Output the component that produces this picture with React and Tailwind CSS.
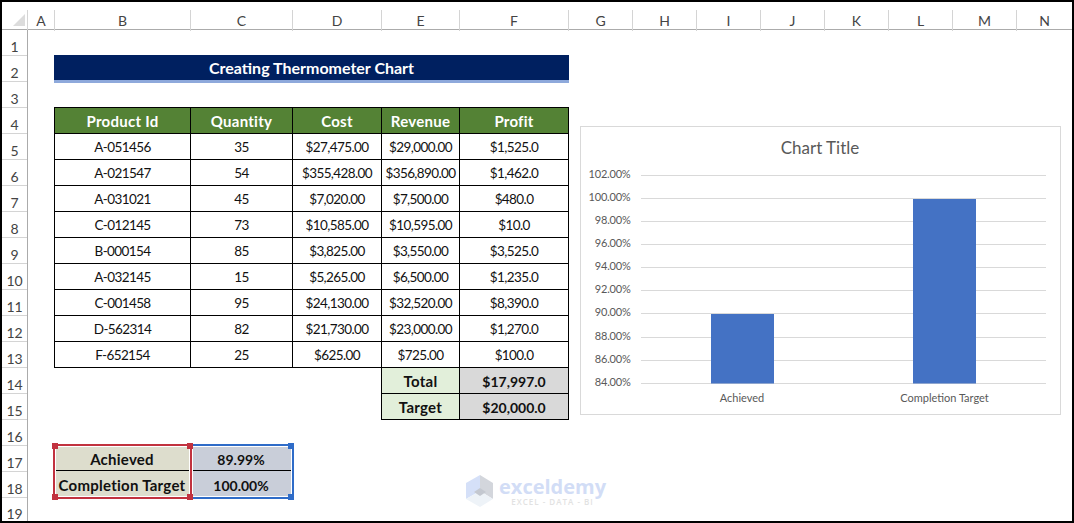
import React from 'react';

const COLUMNS = ['A', 'B', 'C', 'D', 'E', 'F', 'G', 'H', 'I', 'J', 'K', 'L', 'M', 'N'];
const ROWS = Array.from({ length: 19 }, (_, i) => i + 1);

const PRODUCTS = [
  ['A-051456', '35', '$27,475.00', '$29,000.00', '$1,525.0'],
  ['A-021547', '54', '$355,428.00', '$356,890.00', '$1,462.0'],
  ['A-031021', '45', '$7,020.00', '$7,500.00', '$480.0'],
  ['C-012145', '73', '$10,585.00', '$10,595.00', '$10.0'],
  ['B-000154', '85', '$3,825.00', '$3,550.00', '$3,525.0'],
  ['A-032145', '15', '$5,265.00', '$6,500.00', '$1,235.0'],
  ['C-001458', '95', '$24,130.00', '$32,520.00', '$8,390.0'],
  ['D-562314', '82', '$21,730.00', '$23,000.00', '$1,270.0'],
  ['F-652154', '25', '$625.00', '$725.00', '$100.0'],
];

const TABLE_HEAD = ['Product Id', 'Quantity', 'Cost', 'Revenue', 'Profit'];

const AXIS = [
  ['102.00%', 175], ['100.00%', 198], ['98.00%', 221], ['96.00%', 244], ['94.00%', 267],
  ['92.00%', 290], ['90.00%', 313], ['88.00%', 337], ['86.00%', 360], ['84.00%', 383],
];

// one table cell: borders overlap the neighbour so lines stay 1px
function Cell({ children, className = '' }) {
  return (
    <div className={`-mr-px -mb-px pt-[2px] border border-black flex items-center justify-center ${className}`}>
      {children}
    </div>
  );
}

function Handle({ className }) {
  return <span className={`absolute w-[6px] h-[6px] ${className}`}></span>;
}

function ThermometerChart() {
  const font = { fontFamily: 'Lato, sans-serif' };
  return (
    <div className="col-start-8 col-end-16 row-start-5 row-end-17 ml-3 mr-[11px] mt-[19px] mb-[4px] border border-[#d9d9d9] bg-white">
      <svg viewBox="581 127 479 287" width="479" height="287" className="block" style={font}>
        <text x="820" y="154" textAnchor="middle" fontSize="17" fill="#595959">Chart Title</text>
        {AXIS.map(([label, y]) => (
          <g key={label}>
            <line x1="641" x2="1046" y1={y + 0.5} y2={y + 0.5} stroke="#d9d9d9" />
            <text x="630.5" y={y + 0.5} textAnchor="end" dominantBaseline="middle" fontSize="11" letterSpacing="-0.2" fill="#595959">{label}</text>
          </g>
        ))}
        <rect x="711" y="314" width="63" height="69.5" fill="#4472c4" />
        <rect x="913" y="199" width="63" height="184.5" fill="#4472c4" />
        <text x="742" y="402" textAnchor="middle" fontSize="11" fill="#595959">Achieved</text>
        <text x="944.5" y="402" textAnchor="middle" fontSize="11" fill="#595959">Completion Target</text>
      </svg>
    </div>
  );
}

function Watermark() {
  return (
    <div className="absolute left-[464px] top-[473px] flex items-start gap-[5px] pointer-events-none">
      <svg width="28" height="33" viewBox="0 0 28 33" className="block shrink-0">
        <path d="M14 0 L27 8 L27 24 L14 16 Z" fill="#d3d6dc" />
        <path d="M14 0 L0 8 L0 24 L14 16 Z" fill="#d5e0f8" />
        <path d="M0 24 L14 16 L27 24 L14 32 Z" fill="#eef3f8" />
        <path d="M8 17 L14 13 L20 17 L14 21 Z" fill="#c4c8d0" />
      </svg>
      <div className="flex flex-col items-center font-['Open_Sans',sans-serif]">
        <span className="text-[20px] font-bold text-[#d2ddf6] leading-[18px] mt-[3px]">exceldemy</span>
        <span className="text-[8px] font-semibold text-[#e2e2e2] tracking-[1px] leading-[8px] mt-[2px]">EXCEL - DATA - BI</span>
      </div>
    </div>
  );
}

export default function App() {
  return (
    <div className="relative w-[1074px] h-[523px] border-2 border-black bg-white overflow-hidden font-['Lato',sans-serif] text-[14px] text-[#111]">
      <div className="grid grid-cols-[26px_26px_136px_102px_89px_78px_109px_repeat(7,64px)_56px] grid-rows-[28px_25px_repeat(17,26px)_24px] h-full">
        {/* Column headers */}
        <div className="col-span-full grid grid-cols-subgrid border-b border-[#ababab] text-[#444]">
          <div className="mt-2 border-r border-[#d4d4d4] flex justify-end">
            <svg width="25" height="19" viewBox="0 0 25 19" className="block">
              <path d="M11 16 L23 16 L23 4 Z" fill="#dcdcdc" />
            </svg>
          </div>
          {COLUMNS.map((col, i) => (
            <div key={col} className={`mt-2 flex items-center justify-center ${i > 0 ? 'border-l border-[#d4d4d4]' : ''}`}>
              {col}
            </div>
          ))}
        </div>

        {/* Row headers */}
        <div className="col-start-1 row-start-2 row-end-[-1] grid grid-rows-subgrid border-r border-[#ababab] text-[#444]">
          {ROWS.map((row, i) => (
            <div key={row} className={`flex items-center justify-center pt-2 ${i > 0 ? 'border-t border-[#d4d4d4]' : ''}`}>
              {row}
            </div>
          ))}
        </div>

        {/* Title */}
        <div className="col-start-3 col-span-5 row-start-3 -mr-px -mb-[2px] pt-[1px] bg-[#002060] border-b-[3px] border-[#8ea9db] flex items-center justify-center text-white font-bold text-[16px]">
          Creating Thermometer Chart
        </div>

        {/* Product table */}
        <div className="col-start-3 col-span-5 row-start-5 row-span-10 grid grid-cols-subgrid grid-rows-subgrid">
          {TABLE_HEAD.map((head) => (
            <Cell key={head} className="bg-[#548235] text-white font-bold text-[15px] tracking-[0.25px]">{head}</Cell>
          ))}
          {PRODUCTS.flat().map((value, i) => (
            <Cell key={i} className="text-[13.5px] tracking-[-0.6px]">{value}</Cell>
          ))}
        </div>

        {/* Total / Target */}
        <div className="col-start-6 col-span-2 row-start-15 row-span-2 grid grid-cols-subgrid grid-rows-subgrid font-bold">
          <Cell className="bg-[#e2efda] text-[15px] tracking-[0.25px]">Total</Cell>
          <Cell className="bg-[#d9d9d9]">$17,997.0</Cell>
          <Cell className="bg-[#e2efda] text-[15px] tracking-[0.25px]">Target</Cell>
          <Cell className="bg-[#d9d9d9]">$20,000.0</Cell>
        </div>

        {/* Achieved table */}
        <div className="col-start-3 col-span-2 row-start-18 row-span-2 grid grid-cols-subgrid grid-rows-subgrid font-bold">
          <div className="bg-[#ddddcd] border-b border-black pt-[3px] text-[15px] tracking-[0.25px] flex items-center justify-center">Achieved</div>
          <div className="bg-[#c9ced9] border-b border-black pt-[3px] flex items-center justify-center">89.99%</div>
          <div className="bg-[#ddddcd] pt-[2px] text-[15px] tracking-[0.25px] flex items-center justify-center">Completion Target</div>
          <div className="bg-[#c9ced9] pt-[2px] flex items-center justify-center">100.00%</div>
        </div>

        {/* Range highlight of the selected chart: blue first, red sits on top */}
        <div className="col-start-4 row-start-18 row-span-2 relative -mt-px -mr-[2px] -mb-[2px] border-2 border-[#2f6cc8] shadow-[inset_0_0_0_1px_white]">
          <Handle className="-right-[2px] -top-[3px] bg-[#2f6cc8]" />
          <Handle className="-right-[2px] -bottom-[3px] bg-[#2f6cc8]" />
        </div>
        <div className="col-start-3 row-start-18 row-span-2 relative -ml-px -mt-px -mr-[2px] -mb-[2px] border-2 border-[#c1323f] shadow-[inset_0_0_0_1px_white]">
          <Handle className="-left-[3px] -top-[3px] bg-[#c1323f]" />
          <Handle className="-right-[3px] -top-[3px] bg-[#c1323f]" />
          <Handle className="-left-[3px] -bottom-[3px] bg-[#c1323f]" />
          <Handle className="-right-[3px] -bottom-[3px] bg-[#c1323f]" />
        </div>

        <ThermometerChart />
      </div>
      <Watermark />
    </div>
  );
}
